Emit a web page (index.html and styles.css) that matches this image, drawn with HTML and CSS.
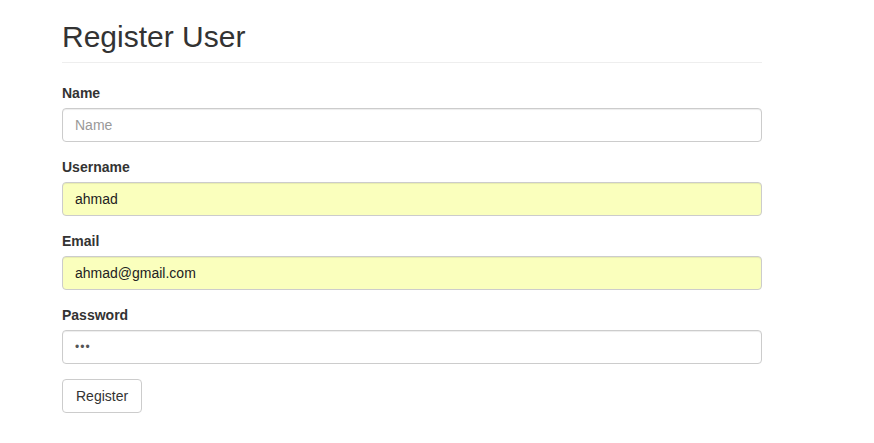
FILE: index.html
```html
<!DOCTYPE html>
<html>
<head>
<meta charset="utf-8">
<link rel="stylesheet" href="styles.css">
</head>
<body>
<div class="container">
  <div class="page-header">
    <h2 class="title">Register User</h2>
  </div>
  <form class="form">
    <div class="form-group">
      <label class="label" for="name">Name</label>
      <input class="form-control" id="name" type="text" placeholder="Name">
    </div>
    <div class="form-group">
      <label class="label" for="username">Username</label>
      <input class="form-control autofilled" id="username" type="text" value="ahmad">
    </div>
    <div class="form-group">
      <label class="label" for="email">Email</label>
      <input class="form-control autofilled" id="email" type="text" value="ahmad@gmail.com">
    </div>
    <div class="form-group">
      <label class="label" for="password">Password</label>
      <input class="form-control password" id="password" type="password" value="abc">
    </div>
    <button class="btn" type="button">Register</button>
  </form>
</div>
</body>
</html>
```
FILE: styles.css
```css
* { box-sizing: border-box; }
html, body { margin: 0; padding: 0; background: #fff; }
body {
  font-family: "Liberation Sans", Arial, sans-serif;
  font-size: 14px;
  line-height: 20px;
  color: #333;
}
.container {
  width: 700px;
  margin-left: 62px;
}
.page-header {
  margin: 20px 0 20px;
  padding-bottom: 9px;
  border-bottom: 1px solid #eee;
}
.title {
  margin: 0;
  font-size: 30px;
  font-weight: 500;
  line-height: 33px;
  color: #333;
}
.form-group { margin-bottom: 15px; }
.label {
  display: block;
  margin-bottom: 5px;
  font-weight: bold;
  font-size: 14px;
  line-height: 20px;
}
.form-control {
  display: block;
  width: 100%;
  height: 34px;
  padding: 6px 12px;
  font-family: "Liberation Sans", Arial, sans-serif;
  font-size: 14px;
  line-height: 20px;
  color: #555;
  background: #fff;
  border: 1px solid #ccc;
  border-radius: 4px;
  box-shadow: inset 0 1px 1px rgba(0,0,0,0.075);
  outline: none;
}
.form-control::placeholder { color: #999; }
.form-control.autofilled {
  background: #faffbd;
  color: #222;
}
.form-control.password {
  color: #555;
  font-size: 12px;
  letter-spacing: 1px;
}
.btn {
  display: inline-block;
  padding: 6px 13px;
  font-family: "Liberation Sans", Arial, sans-serif;
  font-size: 14px;
  line-height: 20px;
  color: #333;
  background: #fff;
  border: 1px solid #ccc;
  border-radius: 4px;
  cursor: pointer;
}
```
